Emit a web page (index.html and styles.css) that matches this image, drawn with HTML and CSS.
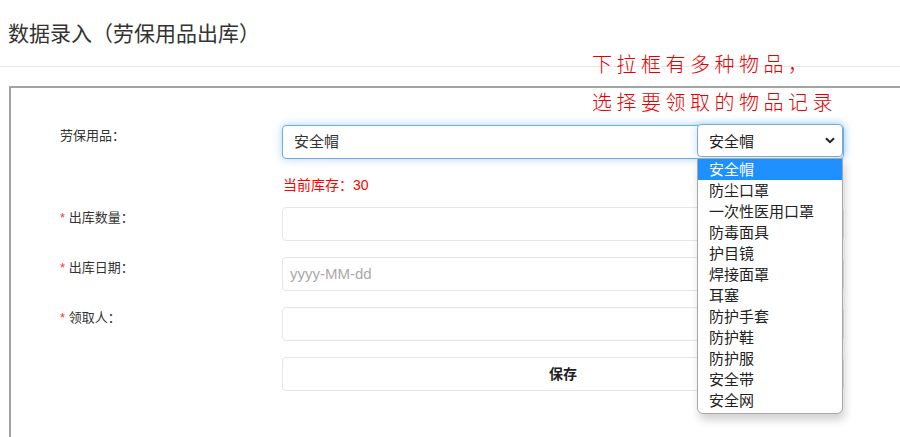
FILE: index.html
```html
<!DOCTYPE html>
<html lang="zh-CN">
<head>
<meta charset="utf-8">
<title>数据录入（劳保用品出库）</title>
<link rel="stylesheet" href="styles.css">
</head>
<body>
<div class="page">
  <header class="page-head">
    <h1 class="title">数据录入（劳保用品出库）</h1>
  </header>
  <div class="note">下拉框有多种物品，<br>选择要领取的物品记录</div>
  <section class="panel">
    <form class="form">
      <div class="row row-first">
        <label class="label">劳保用品：</label>
        <div class="field">
          <div class="input focus">安全帽</div>
          <div class="select-wrap">
            <div class="select">
              <span>安全帽</span>
              <svg class="chev" width="10" height="7" viewBox="0 0 10 7"><path d="M1 1.2 L5 5.2 L9 1.2" fill="none" stroke="#222" stroke-width="2"/></svg>
            </div>
            <ul class="options">
              <li class="active">安全帽</li>
              <li>防尘口罩</li>
              <li>一次性医用口罩</li>
              <li>防毒面具</li>
              <li>护目镜</li>
              <li>焊接面罩</li>
              <li>耳塞</li>
              <li>防护手套</li>
              <li>防护鞋</li>
              <li>防护服</li>
              <li>安全带</li>
              <li>安全网</li>
            </ul>
          </div>
        </div>
      </div>
      <div class="stock-row">
        <span class="stock">当前库存：30</span>
      </div>
      <div class="row">
        <label class="label"><span class="req">*</span> 出库数量：</label>
        <div class="field"><div class="input"></div></div>
      </div>
      <div class="row">
        <label class="label"><span class="req">*</span> 出库日期：</label>
        <div class="field"><div class="input placeholder">yyyy-MM-dd</div></div>
      </div>
      <div class="row">
        <label class="label"><span class="req">*</span> 领取人：</label>
        <div class="field"><div class="input"></div></div>
      </div>
      <div class="row">
        <span class="label"></span>
        <div class="field"><div class="btn">保存</div></div>
      </div>
    </form>
  </section>
</div>
</body>
</html>
```

FILE: styles.css
```css
html, body {
  margin: 0;
  padding: 0;
  background: #fff;
}
body {
  font-family: "Liberation Sans", "Noto Sans CJK SC", sans-serif;
  color: #333;
  width: 900px;
  height: 437px;
  overflow: hidden;
}
.page {
  position: relative;
}
.page-head {
  height: 66px;
  border-bottom: 1px solid #e8e8e8;
  padding-left: 8px;
}
.title {
  margin: 0;
  padding-top: 19px;
  font-size: 21px;
  line-height: 30px;
  font-weight: normal;
  color: #333;
}
.note {
  position: absolute;
  left: 592px;
  top: 46px;
  color: #e60000;
  font-size: 20px;
  line-height: 38px;
  letter-spacing: 4.5px;
  font-weight: 300;
  z-index: 5;
}
.panel {
  margin-top: 19px;
  margin-left: 9px;
  border-top: 2px solid #a3a3a3;
  border-left: 2px solid #a3a3a3;
  height: 360px;
}
.form {
  padding-top: 37px;
  padding-left: 49px;
}
.row {
  display: flex;
  align-items: flex-start;
  margin-bottom: 16px;
}
.row-first {
  margin-bottom: 0;
}
.label {
  width: 222px;
  flex: none;
  font-size: 13px;
  line-height: 20px;
  padding-top: 1px;
  color: #333;
}
.req {
  color: #f33;
}
.field {
  position: relative;
  width: 562px;
}
.input {
  box-sizing: border-box;
  height: 34px;
  border: 1px solid #e6e6e6;
  border-radius: 4px;
  background: #fff;
  padding: 0 11px;
  font-size: 15px;
  line-height: 32px;
  color: #333;
}
.input.focus {
  border-color: #66afe9;
  box-shadow: 0 0 8px rgba(102, 175, 233, 0.55);
}
.input.placeholder {
  color: #aaa;
  padding-left: 7px;
}
.stock-row {
  padding-left: 222px;
  height: 48px;
  box-sizing: border-box;
  padding-top: 16px;
}
.stock {
  font-size: 14px;
  line-height: 20px;
  color: #f00;
  margin-left: 1px;
}
.btn {
  box-sizing: border-box;
  height: 34px;
  border: 1px solid #e6e6e6;
  border-radius: 4px;
  text-align: center;
  font-size: 14px;
  font-weight: bold;
  line-height: 32px;
  color: #222;
}
.select-wrap {
  position: absolute;
  left: 415px;
  top: -1px;
  width: 146px;
  z-index: 4;
}
.select {
  box-sizing: border-box;
  height: 33px;
  border: 1px solid #7eaad2;
  border-radius: 4px;
  background: #fff;
  box-shadow: 0 0 8px rgba(102, 175, 233, 0.4);
  display: flex;
  align-items: center;
  justify-content: space-between;
  padding: 0 7px 0 11px;
  font-size: 15px;
  color: #222;
}
.chev {
  display: block;
}
.options {
  list-style: none;
  margin: 1px 0 0 0;
  padding: 0 0 2px 0;
  border: 1px solid #a8a8a8;
  border-radius: 0 0 6px 6px;
  background: #fff;
  box-shadow: 2px 6px 8px rgba(0, 0, 0, 0.18);
}
.options li {
  height: 21px;
  line-height: 21px;
  padding-left: 11px;
  font-size: 15px;
  color: #222;
}
.options li.active {
  background: #1e90ff;
  color: #fff;
}
```
